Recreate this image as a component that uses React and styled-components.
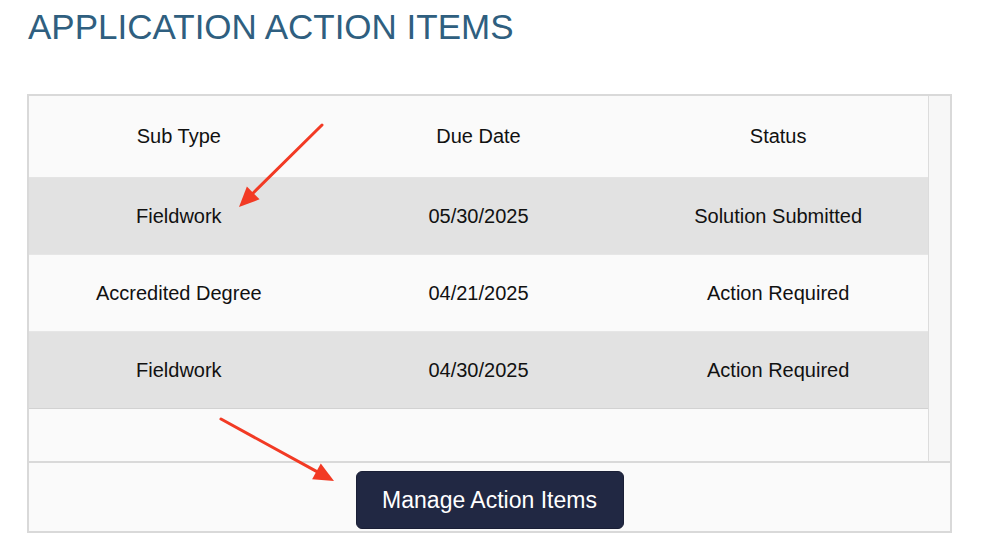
import React from 'react'
import styled, { createGlobalStyle } from 'styled-components'

const GlobalStyle = createGlobalStyle`
  html, body {
    margin: 0;
    padding: 0;
    background: #ffffff;
    font-family: "Liberation Sans", Arial, sans-serif;
  }
`

const Page = styled.div`
  position: relative;
  width: 982px;
  height: 549px;
  padding: 0 30px 0 27px;
  box-sizing: border-box;
`

const Title = styled.h1`
  margin: 0;
  padding-top: 7px;
  height: 94px;
  box-sizing: border-box;
  font-size: 35px;
  line-height: 40px;
  font-weight: 400;
  color: #2f5f80;
  padding-left: 1px;
`

const Panel = styled.section`
  border: 2px solid #d9d9d9;
  background: #fafafa;
  width: 925px;
  box-sizing: border-box;
`

const Body = styled.div`
  display: flex;
  height: 365px;
`

const TableArea = styled.div`
  flex: 1;
  border-right: 1px solid #dcdcdc;
`

const Track = styled.div`
  width: 21px;
  background: #f7f7f7;
`

const Table = styled.table`
  width: 100%;
  border-collapse: collapse;
  table-layout: fixed;
  font-size: 20px;
  color: #111;
`

const HeadCell = styled.th`
  height: 81px;
  font-weight: 400;
  text-align: center;
  padding: 0;
  border-bottom: 1px solid #e4e4e4;
`

const Row = styled.tr`
  background: ${({ $shaded }) => ($shaded ? '#e2e2e2' : '#fafafa')};
  border-bottom: 1px solid ${({ $last }) => ($last ? '#d2d2d2' : '#e6e6e6')};
`

const Cell = styled.td`
  height: 76px;
  text-align: center;
  padding: 0;
`

const Footer = styled.div`
  border-top: 2px solid #d9d9d9;
  height: 70px;
  display: flex;
  justify-content: center;
  align-items: flex-start;
  padding-top: 8px;
  box-sizing: border-box;
`

const ManageButton = styled.button`
  width: 268px;
  height: 58px;
  background: #212843;
  color: #ffffff;
  border: 1px solid #1a1f36;
  border-radius: 6px;
  font-family: "Liberation Sans", Arial, sans-serif;
  font-size: 23px;
  padding: 0;
  cursor: pointer;
`

const ArrowLayer = styled.svg`
  position: absolute;
  left: 0;
  top: 0;
  pointer-events: none;
`

const rows = [
  { type: 'Fieldwork', due: '05/30/2025', status: 'Solution Submitted' },
  { type: 'Accredited Degree', due: '04/21/2025', status: 'Action Required' },
  { type: 'Fieldwork', due: '04/30/2025', status: 'Action Required' },
]

const Arrow = ({ x1, y1, x2, y2 }) => {
  const ang = Math.atan2(y2 - y1, x2 - x1)
  const len = 20
  const w = 9
  const bx = x2 - len * Math.cos(ang)
  const by = y2 - len * Math.sin(ang)
  const px = -Math.sin(ang) * w
  const py = Math.cos(ang) * w
  return (
    <g>
      <line x1={x1} y1={y1} x2={bx} y2={by} stroke="#f23a24" strokeWidth="3" strokeLinecap="round" />
      <polygon points={`${x2},${y2} ${bx + px},${by + py} ${bx - px},${by - py}`} fill="#f23a24" />
    </g>
  )
}

export default function App() {
  return (
    <>
      <GlobalStyle />
      <Page>
        <Title>APPLICATION ACTION ITEMS</Title>
        <Panel>
          <Body>
            <TableArea>
              <Table>
                <thead>
                  <tr>
                    <HeadCell>Sub Type</HeadCell>
                    <HeadCell>Due Date</HeadCell>
                    <HeadCell>Status</HeadCell>
                  </tr>
                </thead>
                <tbody>
                  {rows.map((r, i) => (
                    <Row key={i} $shaded={i % 2 === 0} $last={i === rows.length - 1}>
                      <Cell>{r.type}</Cell>
                      <Cell>{r.due}</Cell>
                      <Cell>{r.status}</Cell>
                    </Row>
                  ))}
                </tbody>
              </Table>
            </TableArea>
            <Track />
          </Body>
          <Footer>
            <ManageButton>Manage Action Items</ManageButton>
          </Footer>
        </Panel>
        <ArrowLayer width="982" height="549">
          <Arrow x1={322} y1={125} x2={239} y2={207} />
          <Arrow x1={221} y1={419} x2={334} y2={481} />
        </ArrowLayer>
      </Page>
    </>
  )
}
